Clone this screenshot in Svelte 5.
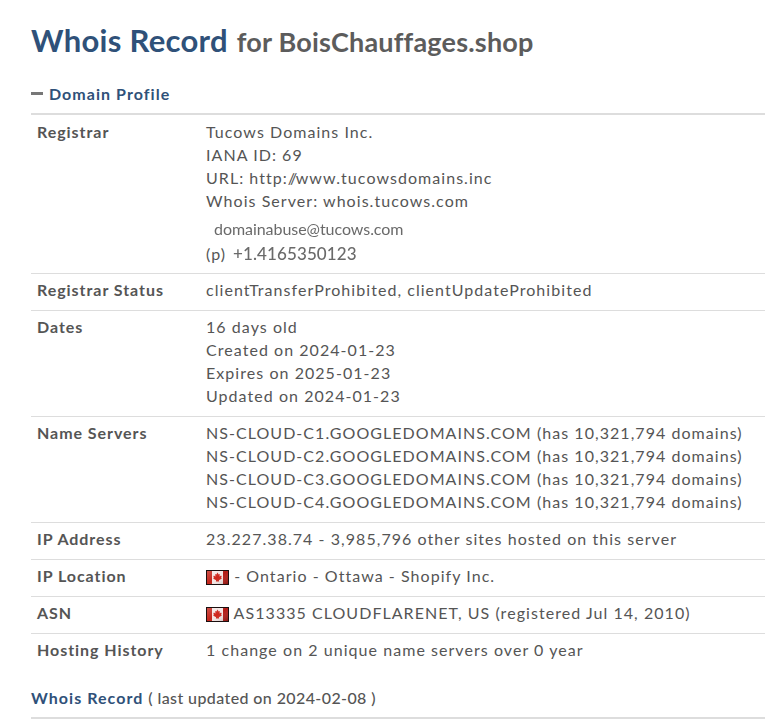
<script lang="ts">
	const servers = ['C1', 'C2', 'C3', 'C4'];
</script>

{#snippet flag()}
	<svg class="flag" width="23" height="15" viewBox="0 0 23 15">
		<defs>
			<linearGradient id="shade" x1="0" y1="0" x2="1" y2="1">
				<stop offset="0" stop-color="#fff" stop-opacity="0.2" />
				<stop offset="0.5" stop-color="#fff" stop-opacity="0" />
				<stop offset="1" stop-color="#000" stop-opacity="0.25" />
			</linearGradient>
			<filter id="soft" x="0" y="0" width="1" height="1">
				<feGaussianBlur stdDeviation="0.5" />
			</filter>
		</defs>
		<rect width="23" height="15" fill="#1a0f0f" />
		<svg x="1" y="1" width="21" height="13" viewBox="1 1 21 13">
			<g filter="url(#soft)">
				<rect x="0" y="0" width="23" height="15" fill="#f4e6e4" />
				<rect x="0" y="0" width="6" height="15" fill="#c4261c" />
				<rect x="17" y="0" width="6" height="15" fill="#b31d15" />
				<path
					d="M11.5 2.5l1.2 2 1.2-.5-.4 2.6 1.6-1 .6 1.2-.6.9.8.7-3 1.9.2 1.2h-3.2l.2-1.2-3-1.9.8-.7-.6-.9.6-1.2 1.6 1-.4-2.6 1.2.5z"
					fill="#cf261c"
				/>
			</g>
			<rect x="1" y="1" width="21" height="13" fill="url(#shade)" />
		</svg>
	</svg>
{/snippet}

<div class="page">
	<h1><span class="main">Whois Record</span> <span class="domain">for BoisChauffages.shop</span></h1>

	<h2 class="profile"><span class="dash"></span>Domain Profile</h2>

	<div class="table">
		<div class="row first">
			<div class="label">Registrar</div>
			<div class="value">
				<div>Tucows Domains Inc.</div>
				<div>IANA ID: 69</div>
				<div>URL: http:<span class="slashes">//</span>www.tucowsdomains.inc</div>
				<div>Whois Server: whois.tucows.com</div>
				<div class="email">domainabuse@tucows.com</div>
				<div class="phone"><span>(p)</span><span class="num">+1.4165350123</span></div>
			</div>
		</div>
		<div class="row">
			<div class="label">Registrar Status</div>
			<div class="value">clientTransferProhibited, clientUpdateProhibited</div>
		</div>
		<div class="row">
			<div class="label">Dates</div>
			<div class="value">
				<div>16 days old</div>
				<div>Created on 2024-01-23</div>
				<div>Expires on 2025-01-23</div>
				<div>Updated on 2024-01-23</div>
			</div>
		</div>
		<div class="row">
			<div class="label">Name Servers</div>
			<div class="value">
				{#each servers as s}
					<div>NS-CLOUD-{s}.GOOGLEDOMAINS.COM (has 10,321,794 domains)</div>
				{/each}
			</div>
		</div>
		<div class="row">
			<div class="label">IP Address</div>
			<div class="value">23.227.38.74 - 3,985,796 other sites hosted on this server</div>
		</div>
		<div class="row">
			<div class="label">IP Location</div>
			<div class="value">{@render flag()} - Ontario - Ottawa - Shopify Inc.</div>
		</div>
		<div class="row">
			<div class="label">ASN</div>
			<div class="value">{@render flag()} AS13335 CLOUDFLARENET, US (registered Jul 14, 2010)</div>
		</div>
		<div class="row last">
			<div class="label">Hosting History</div>
			<div class="value">1 change on 2 unique name servers over 0 year</div>
		</div>
	</div>

	<h2 class="record"><span class="title">Whois Record</span> <span class="sub">( last updated on 2024-02-08 )</span></h2>
</div>

<style>
	:global(body) {
		margin: 0;
		background: #fff;
	}

	.page {
		padding: 0 0 0 31px;
		font-family: Lato, 'Liberation Sans', sans-serif;
		color: #555;
		font-size: 16px;
		line-height: 23px;
		letter-spacing: 1.05px;
		height: 719px;
		box-sizing: border-box;
		overflow: hidden;
	}

	h1 {
		margin: 0;
		padding-top: 21px;
		font-size: 27px;
		line-height: 38px;
		font-weight: 700;
		color: #5c5c5c;
		letter-spacing: 0.3px;
	}

	.main {
		font-size: 31px;
		color: #2f5179;
	}

	.domain {
		margin-left: 2px;
		letter-spacing: 0.2px;
	}

	.profile {
		margin: 0;
		margin-top: 21px;
		display: flex;
		align-items: center;
		font-size: 16px;
		line-height: 23px;
		font-weight: 700;
		color: #2f5179;
		padding-bottom: 8px;
		border-bottom: 2px solid #ddd;
		letter-spacing: 1.05px;
	}

	.dash {
		width: 12px;
		height: 3px;
		background: #777;
		margin-right: 6px;
	}

	.row {
		display: flex;
		padding: 4px 0 9px 6px;
		border-bottom: 1px solid #ddd;
	}

	.row.first {
		padding: 5px 0 8px 6px;
	}

	.row.last {
		border-bottom: none;
	}

	.label {
		width: 169px;
		flex: none;
		font-weight: 700;
		letter-spacing: 0.95px;
		color: #555;
	}

	.value {
		flex: 1;
		white-space: nowrap;
	}

	.slashes {
		letter-spacing: -1.5px;
	}

	.flag {
		vertical-align: -3px;
	}

	.email {
		margin-top: 4px;
		padding-left: 8px;
		height: 26px;
		line-height: 26px;
		font-size: 16px;
		letter-spacing: -0.05px;
		color: #6a6a6a;
		filter: blur(0.4px);
	}

	.phone {
		display: flex;
		gap: 7px;
		height: 23px;
		line-height: 24px;
	}

	.num {
		font-size: 17px;
		font-weight: 500;
		color: #6a6a6a;
		letter-spacing: 0.1px;
		filter: blur(0.4px);
	}

	.record {
		margin: 0;
		margin-top: 16px;
		font-size: 16px;
		line-height: 23px;
		font-weight: 700;
		padding-bottom: 8px;
		border-bottom: 2px solid #ddd;
	}

	.record .title {
		color: #2f5179;
	}

	.record .sub {
		color: #555;
		font-weight: 500;
		letter-spacing: 0.4px;
	}
</style>
